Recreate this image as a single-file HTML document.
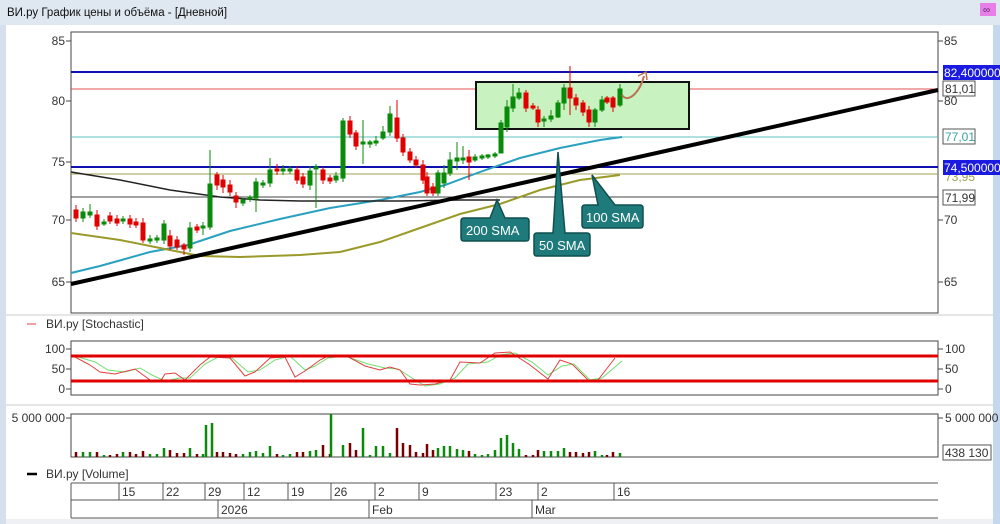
<!DOCTYPE html>
<html><head><meta charset="utf-8"><style>
html,body{margin:0;padding:0;background:#fff;}
body{width:1000px;height:524px;overflow:hidden;position:relative;font-family:"Liberation Sans","DejaVu Sans",sans-serif;}
svg{position:absolute;left:0;top:0;}
text{font-family:"Liberation Sans","DejaVu Sans",sans-serif;}
</style></head><body>
<svg width="1000" height="524" viewBox="0 0 1000 524">
<rect x="0" y="0" width="1000" height="524" fill="#dfe7f0"/>
<rect x="6" y="25" width="987" height="495" fill="#fff"/>
<rect x="993" y="25" width="7" height="499" fill="#c4d8ee"/>
<rect x="0" y="25" width="6" height="499" fill="#d6e0ec"/>
<rect x="6" y="519" width="987" height="5" fill="#eef0f3"/>
<text x="7" y="16" font-size="11.5" fill="#111">ВИ.ру График цены и объёма - [Дневной]</text>
<rect x="980" y="3" width="16" height="13" fill="#e87ee8"/>
<text x="983" y="13" font-size="10" fill="#503060">&#x221E;</text>

<rect x="71" y="32" width="867" height="281" fill="#fff" stroke="#444" stroke-width="1"/>
<g font-size="12" fill="#333" text-anchor="end">
<text x="65" y="45">85</text><text x="65" y="105">80</text><text x="65" y="166">75</text><text x="65" y="224">70</text><text x="65" y="286">65</text>
</g>
<g stroke="#444"><line x1="66" y1="41" x2="71" y2="41"/><line x1="66" y1="101" x2="71" y2="101"/><line x1="66" y1="162" x2="71" y2="162"/><line x1="66" y1="220" x2="71" y2="220"/><line x1="66" y1="282" x2="71" y2="282"/>
<line x1="938" y1="41" x2="943" y2="41"/><line x1="938" y1="101" x2="943" y2="101"/><line x1="938" y1="220" x2="943" y2="220"/><line x1="938" y1="282" x2="943" y2="282"/></g>
<g font-size="12" fill="#333"><text x="944" y="45">85</text><text x="944" y="105">80</text><text x="944" y="224">70</text><text x="944" y="286">65</text></g>

<line x1="71" y1="72" x2="938" y2="72" stroke="#1010b0" stroke-width="2"/>
<line x1="71" y1="89" x2="938" y2="89" stroke="#e05050" stroke-width="1"/>
<line x1="71" y1="137" x2="938" y2="137" stroke="#5cc0c0" stroke-width="1"/>
<line x1="71" y1="167" x2="938" y2="167" stroke="#1010b0" stroke-width="2"/>
<line x1="71" y1="174" x2="938" y2="174" stroke="#a0a050" stroke-width="1"/>
<line x1="71" y1="197" x2="938" y2="197" stroke="#444" stroke-width="1"/>

<rect x="476" y="82" width="213" height="47" fill="#c8f2bf" stroke="#111" stroke-width="2"/>

<polyline fill="none" stroke="#2aa0c0" stroke-width="2" points="71,273 100,266 150,252 188,245 230,231 280,219 330,208 380,200 420,192 445,185 480,172 520,158 560,148 600,140 622,137"/>
<polyline fill="none" stroke="#9a9a2a" stroke-width="2" points="71,233 120,240 160,248 200,256 240,257 300,255 340,252 380,242 420,228 460,214 500,204 540,190 580,180 620,175"/>
<polyline fill="none" stroke="#222" stroke-width="1.5" points="71,172 120,180 170,190 220,197 260,200 300,201 350,201 400,201 460,200 500,200"/>
<line x1="71" y1="284" x2="938" y2="90" stroke="#000" stroke-width="4"/>

<g stroke-width="1">
<g fill="#e00000" stroke="#e00000">
<line x1="76" y1="205" x2="76" y2="222"/><rect x="74" y="210" width="4" height="8"/>
<line x1="97" y1="210" x2="97" y2="230"/><rect x="95" y="215" width="4" height="11"/>
<line x1="110" y1="212" x2="110" y2="224"/><rect x="108" y="216" width="4" height="5"/>
<line x1="117" y1="215" x2="117" y2="226"/><rect x="115" y="219" width="4" height="4"/>
<line x1="130" y1="215" x2="130" y2="228"/><rect x="128" y="219" width="4" height="5"/>
<line x1="136" y1="218" x2="136" y2="228"/><rect x="134" y="222" width="4" height="3"/>
<line x1="143" y1="218" x2="143" y2="243"/><rect x="141" y="223" width="4" height="17"/>
<line x1="170" y1="230" x2="170" y2="250"/><rect x="168" y="236" width="4" height="10"/>
<line x1="177" y1="236" x2="177" y2="250"/><rect x="175" y="240" width="4" height="7"/>
<line x1="184" y1="243" x2="184" y2="255"/><rect x="182" y="245" width="4" height="4"/>
<line x1="197" y1="224" x2="197" y2="233"/><rect x="195" y="227" width="4" height="3"/>
<line x1="217" y1="172" x2="217" y2="190"/><rect x="215" y="175" width="4" height="10"/>
<line x1="223" y1="175" x2="223" y2="193"/><rect x="221" y="180" width="4" height="7"/>
<line x1="230" y1="180" x2="230" y2="196"/><rect x="228" y="185" width="4" height="7"/>
<line x1="236" y1="192" x2="236" y2="208"/><rect x="234" y="196" width="4" height="6"/>
<line x1="277" y1="164" x2="277" y2="175"/><rect x="275" y="169" width="4" height="2"/>
<line x1="297" y1="166" x2="297" y2="184"/><rect x="295" y="170" width="4" height="10"/>
<line x1="303" y1="173" x2="303" y2="188"/><rect x="301" y="177" width="4" height="7"/>
<line x1="323" y1="167" x2="323" y2="184"/><rect x="321" y="170" width="4" height="10"/>
<line x1="330" y1="175" x2="330" y2="184"/><rect x="328" y="178" width="4" height="3"/>
<line x1="350" y1="116" x2="350" y2="138"/><rect x="348" y="121" width="4" height="13"/>
<line x1="356" y1="130" x2="356" y2="150"/><rect x="354" y="133" width="4" height="13"/>
<line x1="397" y1="100" x2="397" y2="142"/><rect x="395" y="118" width="4" height="20"/>
<line x1="403" y1="134" x2="403" y2="156"/><rect x="401" y="138" width="4" height="14"/>
<line x1="410" y1="148" x2="410" y2="163"/><rect x="408" y="152" width="4" height="8"/>
<line x1="416" y1="156" x2="416" y2="168"/><rect x="414" y="160" width="4" height="5"/>
<line x1="423" y1="160" x2="423" y2="184"/><rect x="421" y="165" width="4" height="15"/>
<line x1="427" y1="172" x2="427" y2="196"/><rect x="425" y="177" width="4" height="16"/>
<line x1="433" y1="183" x2="433" y2="196"/><rect x="431" y="187" width="4" height="6"/>
<line x1="469" y1="150" x2="469" y2="180"/><rect x="467" y="157" width="4" height="5"/>
<line x1="526" y1="90" x2="526" y2="112"/><rect x="524" y="93" width="4" height="15"/>
<line x1="533" y1="103" x2="533" y2="110"/><rect x="531" y="106" width="4" height="2"/>
<line x1="538" y1="106" x2="538" y2="127"/><rect x="536" y="110" width="4" height="12"/>
<line x1="570" y1="66" x2="570" y2="115"/><rect x="568" y="88" width="4" height="10"/>
<line x1="576" y1="94" x2="576" y2="110"/><rect x="574" y="98" width="4" height="7"/>
<line x1="583" y1="100" x2="583" y2="116"/><rect x="581" y="103" width="4" height="9"/>
<line x1="589" y1="106" x2="589" y2="127"/><rect x="587" y="110" width="4" height="12"/>
<line x1="607" y1="96" x2="607" y2="104"/><rect x="605" y="98" width="4" height="4"/>
<line x1="613" y1="96" x2="613" y2="112"/><rect x="611" y="98" width="4" height="9"/>
</g>
<g fill="#0a8a0a" stroke="#0a8a0a">
<line x1="83" y1="208" x2="83" y2="222"/><rect x="81" y="212" width="4" height="6"/>
<line x1="90" y1="204" x2="90" y2="218"/><rect x="88" y="212" width="4" height="3"/>
<line x1="104" y1="219" x2="104" y2="226"/><rect x="102" y="222" width="4" height="2"/>
<line x1="123" y1="216" x2="123" y2="224"/><rect x="121" y="219" width="4" height="2"/>
<line x1="150" y1="235" x2="150" y2="244"/><rect x="148" y="239" width="4" height="2"/>
<line x1="157" y1="235" x2="157" y2="243"/><rect x="155" y="238" width="4" height="2"/>
<line x1="164" y1="220" x2="164" y2="244"/><rect x="162" y="224" width="4" height="16"/>
<line x1="190" y1="222" x2="190" y2="252"/><rect x="188" y="228" width="4" height="20"/>
<line x1="203" y1="222" x2="203" y2="235"/><rect x="201" y="226" width="4" height="2"/>
<line x1="210" y1="150" x2="210" y2="230"/><rect x="208" y="184" width="4" height="43"/>
<line x1="243" y1="198" x2="243" y2="206"/><rect x="241" y="200" width="4" height="3"/>
<line x1="250" y1="195" x2="250" y2="202"/><rect x="248" y="197" width="4" height="2"/>
<line x1="256" y1="178" x2="256" y2="212"/><rect x="254" y="182" width="4" height="16"/>
<line x1="263" y1="180" x2="263" y2="188"/><rect x="261" y="183" width="4" height="2"/>
<line x1="270" y1="158" x2="270" y2="187"/><rect x="268" y="170" width="4" height="13"/>
<line x1="283" y1="165" x2="283" y2="175"/><rect x="281" y="169" width="4" height="2"/>
<line x1="290" y1="166" x2="290" y2="174"/><rect x="288" y="169" width="4" height="2"/>
<line x1="310" y1="166" x2="310" y2="190"/><rect x="308" y="171" width="4" height="14"/>
<line x1="316" y1="164" x2="316" y2="208"/><rect x="314" y="167" width="4" height="2"/>
<line x1="336" y1="172" x2="336" y2="183"/><rect x="334" y="176" width="4" height="4"/>
<line x1="343" y1="118" x2="343" y2="182"/><rect x="341" y="121" width="4" height="57"/>
<line x1="363" y1="120" x2="363" y2="164"/><rect x="361" y="142" width="4" height="2"/>
<line x1="370" y1="140" x2="370" y2="148"/><rect x="368" y="142" width="4" height="2"/>
<line x1="376" y1="136" x2="376" y2="146"/><rect x="374" y="141" width="4" height="2"/>
<line x1="383" y1="126" x2="383" y2="140"/><rect x="381" y="132" width="4" height="6"/>
<line x1="390" y1="106" x2="390" y2="136"/><rect x="388" y="114" width="4" height="18"/>
<line x1="438" y1="170" x2="438" y2="196"/><rect x="436" y="173" width="4" height="20"/>
<line x1="444" y1="165" x2="444" y2="188"/><rect x="442" y="173" width="4" height="10"/>
<line x1="450" y1="152" x2="450" y2="176"/><rect x="448" y="160" width="4" height="13"/>
<line x1="457" y1="142" x2="457" y2="170"/><rect x="455" y="158" width="4" height="3"/>
<line x1="463" y1="146" x2="463" y2="164"/><rect x="461" y="158" width="4" height="2"/>
<line x1="475" y1="154" x2="475" y2="162"/><rect x="473" y="157" width="4" height="3"/>
<line x1="482" y1="154" x2="482" y2="160"/><rect x="480" y="156" width="4" height="2"/>
<line x1="488" y1="154" x2="488" y2="159"/><rect x="486" y="155" width="4" height="2"/>
<line x1="495" y1="152" x2="495" y2="158"/><rect x="493" y="154" width="4" height="2"/>
<line x1="501" y1="120" x2="501" y2="153"/><rect x="499" y="123" width="4" height="30"/>
<line x1="507" y1="100" x2="507" y2="132"/><rect x="505" y="107" width="4" height="20"/>
<line x1="513" y1="84" x2="513" y2="112"/><rect x="511" y="97" width="4" height="11"/>
<line x1="519" y1="88" x2="519" y2="100"/><rect x="517" y="93" width="4" height="5"/>
<line x1="544" y1="116" x2="544" y2="127"/><rect x="542" y="119" width="4" height="2"/>
<line x1="551" y1="110" x2="551" y2="122"/><rect x="549" y="116" width="4" height="3"/>
<line x1="558" y1="100" x2="558" y2="118"/><rect x="556" y="103" width="4" height="14"/>
<line x1="564" y1="84" x2="564" y2="110"/><rect x="562" y="88" width="4" height="15"/>
<line x1="595" y1="108" x2="595" y2="127"/><rect x="593" y="110" width="4" height="12"/>
<line x1="602" y1="96" x2="602" y2="112"/><rect x="600" y="100" width="4" height="10"/>
<line x1="620" y1="84" x2="620" y2="107"/><rect x="618" y="89" width="4" height="16"/>
</g></g>

<path d="M622,95 C628,104 640,92 644,76" fill="none" stroke="#b87050" stroke-width="2"/>
<path d="M638,76 L646,72 L647,80" fill="none" stroke="#b87050" stroke-width="1.5"/>

<g fill="#1f7b7b" stroke="#0f4f4f" stroke-width="1.5">
<path d="M464,218 L490,218 L497,200 L505,218 L526,218 Q529,218 529,221 L529,238 Q529,241 526,241 L464,241 Q461,241 461,238 L461,221 Q461,218 464,218 Z"/>
<path d="M537,233 L553,233 L558,152 L565,233 L587,233 Q590,233 590,236 L590,253 Q590,256 587,256 L537,256 Q534,256 534,253 L534,236 Q534,233 537,233 Z"/>
<path d="M585,205 L598,205 L592,175 L615,205 L640,205 Q643,205 643,208 L643,225 Q643,228 640,228 L585,228 Q582,228 582,225 L582,208 Q582,205 585,205 Z"/>
</g>
<g fill="#fff" font-size="13"><text x="466" y="235">200 SMA</text><text x="539" y="250">50 SMA</text><text x="586" y="222">100 SMA</text></g>

<rect x="943" y="65" width="57" height="15" fill="#1a1ae0"/>
<text x="944" y="77" font-size="12" fill="#fff">82,400000</text>
<rect x="943" y="81" width="32" height="15" fill="#fff" stroke="#555"/>
<text x="945" y="93" font-size="12" fill="#333">81,01</text>
<rect x="943" y="129" width="32" height="15" fill="#fff" stroke="#555"/>
<text x="945" y="141" font-size="12" fill="#3aa0a0">77,01</text>
<text x="945" y="181" font-size="12" fill="#a0a050">73,95</text>
<rect x="943" y="160" width="57" height="15" fill="#1a1ae0"/>
<text x="944" y="172" font-size="12" fill="#fff">74,500000</text>
<rect x="943" y="190" width="32" height="15" fill="#fff" stroke="#555"/>
<text x="945" y="202" font-size="12" fill="#333">71,99</text>

<line x1="6" y1="315" x2="993" y2="315" stroke="#ccc"/>

<line x1="27" y1="324" x2="36" y2="324" stroke="#e04040"/>
<text x="46" y="328" font-size="12" fill="#333">ВИ.ру [Stochastic]</text>
<rect x="71" y="341" width="867" height="54" fill="#fff" stroke="#444"/>
<g font-size="12" fill="#333" text-anchor="end"><text x="65" y="353">100</text><text x="65" y="373">50</text><text x="65" y="393">0</text></g>
<g font-size="12" fill="#333"><text x="945" y="353">100</text><text x="945" y="373">50</text><text x="945" y="393">0</text></g>
<g stroke="#444"><line x1="66" y1="349" x2="71" y2="349"/><line x1="66" y1="369" x2="71" y2="369"/><line x1="66" y1="389" x2="71" y2="389"/><line x1="938" y1="349" x2="943" y2="349"/><line x1="938" y1="369" x2="943" y2="369"/><line x1="938" y1="389" x2="943" y2="389"/></g>
<polyline fill="none" stroke="#70e070" stroke-width="1" points="75,356 95,362 108,370 125,372 140,368 152,375 165,381 180,378 190,378 205,364 218,357 232,358 248,372 260,370 275,360 290,356 305,370 315,366 328,358 345,356 368,364 385,368 398,369 412,378 425,386 440,384 455,378 468,364 488,362 500,355 515,353 532,362 548,375 562,366 574,364 590,380 602,378 622,361"/>
<polyline fill="none" stroke="#e04040" stroke-width="1" points="75,357 90,365 100,372 115,374 135,369 150,380 160,382 165,374 175,373 185,380 200,365 210,357 230,358 245,376 255,372 270,358 285,357 295,377 305,371 320,360 330,355 345,355 365,366 380,370 390,367 400,370 410,384 420,385 435,384 450,380 460,362 480,363 495,353 510,352 530,365 548,379 560,360 572,364 588,380 598,380 615,358"/>
<line x1="71" y1="356" x2="938" y2="356" stroke="#e00000" stroke-width="3"/>
<line x1="71" y1="381" x2="938" y2="381" stroke="#e00000" stroke-width="3"/>

<line x1="6" y1="405" x2="993" y2="405" stroke="#ccc"/>

<rect x="71" y="414" width="867" height="43" fill="#fff" stroke="#444"/>
<text x="65" y="422" font-size="12" fill="#333" text-anchor="end">5 000 000</text>
<text x="945" y="422" font-size="12" fill="#333">5 000 000</text>
<line x1="66" y1="418" x2="71" y2="418" stroke="#444"/><line x1="938" y1="418" x2="943" y2="418" stroke="#444"/>
<rect x="943" y="445" width="48" height="15" fill="#fff" stroke="#555"/>
<text x="945" y="457" font-size="12" fill="#333">438 130</text>
<g stroke-width="2.5">
<g stroke="#7a0000">
<line x1="76" y1="457" x2="76" y2="452"/><line x1="97" y1="457" x2="97" y2="452"/><line x1="110" y1="457" x2="110" y2="455"/><line x1="117" y1="457" x2="117" y2="454"/><line x1="130" y1="457" x2="130" y2="452"/><line x1="136" y1="457" x2="136" y2="454"/><line x1="143" y1="457" x2="143" y2="451"/><line x1="170" y1="457" x2="170" y2="450"/><line x1="177" y1="457" x2="177" y2="453"/><line x1="184" y1="457" x2="184" y2="453"/><line x1="197" y1="457" x2="197" y2="454"/><line x1="217" y1="457" x2="217" y2="452"/><line x1="223" y1="457" x2="223" y2="452"/><line x1="230" y1="457" x2="230" y2="453"/><line x1="236" y1="457" x2="236" y2="454"/><line x1="277" y1="457" x2="277" y2="454"/><line x1="297" y1="457" x2="297" y2="452"/><line x1="303" y1="457" x2="303" y2="452"/><line x1="323" y1="457" x2="323" y2="445"/><line x1="330" y1="457" x2="330" y2="454"/><line x1="350" y1="457" x2="350" y2="443"/><line x1="356" y1="457" x2="356" y2="450"/><line x1="397" y1="457" x2="397" y2="428"/><line x1="403" y1="457" x2="403" y2="443"/><line x1="410" y1="457" x2="410" y2="445"/><line x1="416" y1="457" x2="416" y2="452"/><line x1="423" y1="457" x2="423" y2="453"/><line x1="427" y1="457" x2="427" y2="444"/><line x1="433" y1="457" x2="433" y2="450"/><line x1="469" y1="457" x2="469" y2="451"/><line x1="526" y1="457" x2="526" y2="455"/><line x1="533" y1="457" x2="533" y2="455"/><line x1="538" y1="457" x2="538" y2="450"/><line x1="570" y1="457" x2="570" y2="452"/><line x1="576" y1="457" x2="576" y2="452"/><line x1="583" y1="457" x2="583" y2="453"/><line x1="589" y1="457" x2="589" y2="452"/><line x1="607" y1="457" x2="607" y2="455"/><line x1="613" y1="457" x2="613" y2="452"/>
</g>
<g stroke="#0a8a0a">
<line x1="83" y1="457" x2="83" y2="452"/><line x1="90" y1="457" x2="90" y2="452"/><line x1="104" y1="457" x2="104" y2="455"/><line x1="123" y1="457" x2="123" y2="452"/><line x1="150" y1="457" x2="150" y2="454"/><line x1="157" y1="457" x2="157" y2="454"/><line x1="164" y1="457" x2="164" y2="448"/><line x1="190" y1="457" x2="190" y2="448"/><line x1="203" y1="457" x2="203" y2="454"/><line x1="206" y1="457" x2="206" y2="425"/><line x1="212" y1="457" x2="212" y2="423"/><line x1="243" y1="457" x2="243" y2="454"/><line x1="250" y1="457" x2="250" y2="452"/><line x1="256" y1="457" x2="256" y2="451"/><line x1="263" y1="457" x2="263" y2="453"/><line x1="270" y1="457" x2="270" y2="446"/><line x1="283" y1="457" x2="283" y2="455"/><line x1="290" y1="457" x2="290" y2="454"/><line x1="310" y1="457" x2="310" y2="451"/><line x1="316" y1="457" x2="316" y2="450"/><line x1="331" y1="457" x2="331" y2="414"/><line x1="343" y1="457" x2="343" y2="445"/><line x1="363" y1="457" x2="363" y2="428"/><line x1="370" y1="457" x2="370" y2="455"/><line x1="376" y1="457" x2="376" y2="446"/><line x1="383" y1="457" x2="383" y2="446"/><line x1="390" y1="457" x2="390" y2="453"/><line x1="438" y1="457" x2="438" y2="448"/><line x1="444" y1="457" x2="444" y2="446"/><line x1="450" y1="457" x2="450" y2="446"/><line x1="457" y1="457" x2="457" y2="449"/><line x1="463" y1="457" x2="463" y2="450"/><line x1="475" y1="457" x2="475" y2="454"/><line x1="482" y1="457" x2="482" y2="455"/><line x1="488" y1="457" x2="488" y2="454"/><line x1="495" y1="457" x2="495" y2="450"/><line x1="501" y1="457" x2="501" y2="438"/><line x1="507" y1="457" x2="507" y2="435"/><line x1="513" y1="457" x2="513" y2="443"/><line x1="519" y1="457" x2="519" y2="449"/><line x1="544" y1="457" x2="544" y2="451"/><line x1="551" y1="457" x2="551" y2="451"/><line x1="558" y1="457" x2="558" y2="451"/><line x1="564" y1="457" x2="564" y2="448"/><line x1="595" y1="457" x2="595" y2="451"/><line x1="602" y1="457" x2="602" y2="455"/><line x1="620" y1="457" x2="620" y2="453"/>
</g></g>

<line x1="27" y1="474" x2="37" y2="474" stroke="#000" stroke-width="2.5"/>
<text x="46" y="478" font-size="12" fill="#333">ВИ.ру [Volume]</text>

<g stroke="#555" fill="none">
<line x1="71" y1="483" x2="938" y2="483"/><line x1="71" y1="500" x2="938" y2="500"/><line x1="71" y1="518" x2="938" y2="518"/>
<line x1="71" y1="483" x2="71" y2="518"/>
<line x1="119" y1="483" x2="119" y2="500"/><line x1="163" y1="483" x2="163" y2="500"/><line x1="205" y1="483" x2="205" y2="500"/><line x1="244" y1="483" x2="244" y2="500"/><line x1="288" y1="483" x2="288" y2="500"/><line x1="331" y1="483" x2="331" y2="500"/><line x1="375" y1="483" x2="375" y2="500"/><line x1="419" y1="483" x2="419" y2="500"/><line x1="496" y1="483" x2="496" y2="500"/><line x1="538" y1="483" x2="538" y2="500"/><line x1="614" y1="483" x2="614" y2="500"/>
<line x1="218" y1="500" x2="218" y2="518"/><line x1="369" y1="500" x2="369" y2="518"/><line x1="532" y1="500" x2="532" y2="518"/>
</g>
<g font-size="12" fill="#333">
<text x="122" y="496">15</text><text x="166" y="496">22</text><text x="208" y="496">29</text><text x="247" y="496">12</text><text x="291" y="496">19</text><text x="334" y="496">26</text><text x="378" y="496">2</text><text x="422" y="496">9</text><text x="499" y="496">23</text><text x="541" y="496">2</text><text x="617" y="496">16</text>
<text x="221" y="514">2026</text><text x="372" y="514">Feb</text><text x="535" y="514">Mar</text>
</g>
</svg>
</body></html>
